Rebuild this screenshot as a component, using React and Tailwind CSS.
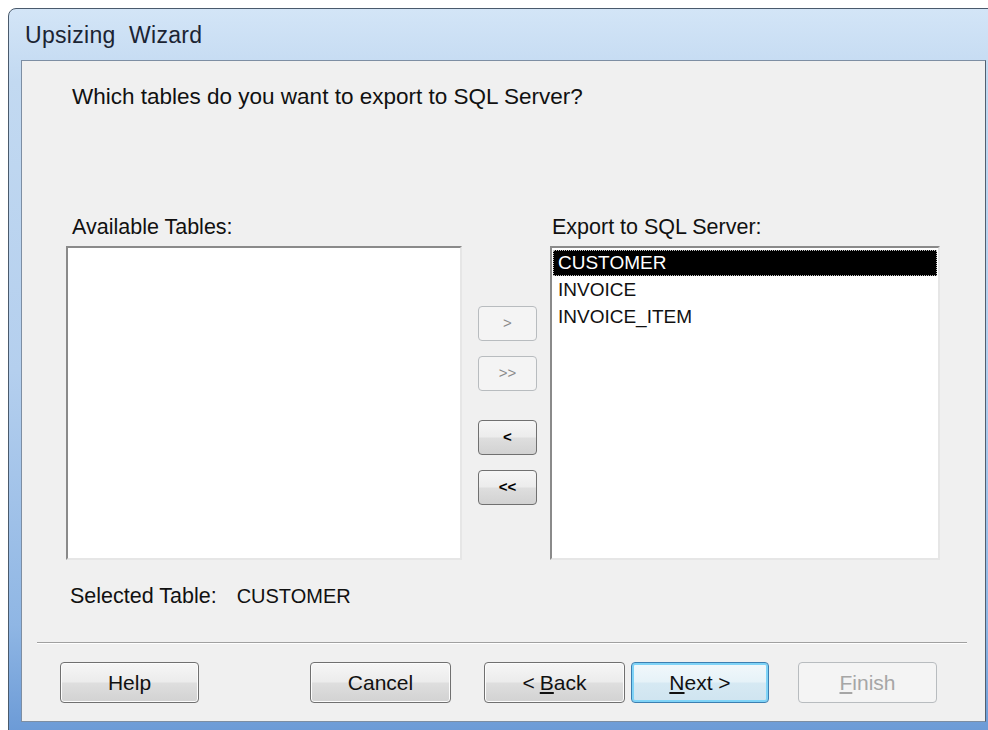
const font = { fontFamily: '"Liberation Sans", Arial, sans-serif' };

const winBtn =
  "h-[41px] rounded-[4px] border border-[#707070] bg-[linear-gradient(to_bottom,#f6f6f6_0%,#ececec_48%,#dedede_52%,#d2d2d2_100%)] shadow-[inset_0_0_0_1px_#fcfcfc] text-[21px] text-[#111] flex items-center justify-center";

const disabledBtn =
  "h-[41px] rounded-[4px] border border-[#b8bcbf] bg-[#f4f4f4] text-[21px] text-[#a6a6a6] flex items-center justify-center";

const ArrowButton = ({ label, disabled }) => (
  <div
    className={
      disabled
        ? "w-[59px] h-[35px] rounded-[4px] border border-[#b8bcbf] bg-[#f4f4f4] text-[#8a8a8a] text-[15px] flex items-center justify-center"
        : "w-[59px] h-[35px] rounded-[4px] border border-[#707070] bg-[linear-gradient(to_bottom,#f6f6f6_0%,#ececec_48%,#dedede_52%,#d2d2d2_100%)] text-black text-[15px] font-bold flex items-center justify-center"
    }
  >
    {label}
  </div>
);

const ListBox = ({ width, children }) => (
  <div
    className="h-[314px] bg-white border-2 border-t-[#8a8a8a] border-l-[#8a8a8a] border-r-[#e6e6e6] border-b-[#e6e6e6] p-[1px]"
    style={{ width }}
  >
    {children}
  </div>
);

export default function App() {
  return (
    <div className="w-[988px] h-[730px] bg-white overflow-hidden relative" style={font}>
      <div className="ml-[8px] mt-[8px] w-[991px] h-[727px] rounded-t-[8px] border border-[#4a5a6c] bg-[linear-gradient(to_bottom,#d3e5f7_0%,#c2d9f1_10%,#b4cfee_50%,#8fb6e4_85%,#6b9ad6_100%)] pl-[12px] pr-[12px] pb-[12px] flex flex-col">
        {/* title bar */}
        <div className="h-[51px] flex items-center pl-[4px] pt-[2px]">
          <span className="text-[23px] text-[#1b2433] whitespace-pre tracking-[0.3px]">
            Upsizing  Wizard
          </span>
        </div>

        {/* client area */}
        <div className="flex-1 bg-[#f0f0f0] border border-[#7d8ea3] border-r-[#52606f] flex flex-col text-[21px] text-[#111]">
          <div className="ml-[50px] mt-[24px] h-[24px] leading-[24px] text-[22.5px]">
            Which tables do you want to export to SQL Server?
          </div>

          <div className="mt-[106px] ml-[44px] flex items-start">
            <div className="flex flex-col">
              <div className="ml-[6px] h-[24px] leading-[24px] mb-[7px] text-[21.5px]">Available Tables:</div>
              <ListBox width={396} />
            </div>

            <div className="ml-[16px] mt-[91px] flex flex-col">
              <ArrowButton label=">" disabled />
              <div className="mt-[15px]">
                <ArrowButton label=">>" disabled />
              </div>
              <div className="mt-[29px]">
                <ArrowButton label="<" />
              </div>
              <div className="mt-[15px]">
                <ArrowButton label="<<" />
              </div>
            </div>

            <div className="ml-[13px] flex flex-col">
              <div className="ml-[2px] h-[24px] leading-[24px] mb-[7px] text-[21.5px]">Export to SQL Server:</div>
              <ListBox width={390}>
                <div className="mt-[1px] h-[26px] leading-[26px] pl-[5px] bg-black text-white outline-1 outline-dotted outline-[#bdbdbd] -outline-offset-1 text-[19px]">
                  CUSTOMER
                </div>
                <div className="h-[27px] leading-[27px] pl-[5px] text-[19px]">INVOICE</div>
                <div className="h-[27px] leading-[27px] pl-[5px] text-[19px]">INVOICE_ITEM</div>
              </ListBox>
            </div>
          </div>

          <div className="mt-[24px] ml-[48px] h-[24px] leading-[24px] flex">
            <span className="text-[21.5px]">Selected Table:</span>
            <span className="ml-[20px] text-[20px]">CUSTOMER</span>
          </div>

          <div className="mt-[34px] ml-[15px] w-[930px] border-t border-[#a0a0a0] border-b border-b-white" />

          <div className="mt-[18px] ml-[38px] flex">
            <div className={`${winBtn} w-[139px]`}>Help</div>
            <div className={`${winBtn} w-[141px] ml-[111px]`}>Cancel</div>
            <div className={`${winBtn} w-[141px] ml-[33px]`}>
              &lt; <span className="underline underline-offset-2 ml-[5px]">B</span>ack
            </div>
            <div className="h-[41px] w-[138px] ml-[6px] rounded-[4px] border border-[#3c7fb1] shadow-[inset_0_0_0_2px_#7fd3f7] bg-[linear-gradient(to_bottom,#f2f8fb_0%,#e6f2f8_48%,#d6e9f3_52%,#cfe4f0_100%)] text-[21px] text-[#111] flex items-center justify-center">
              <span className="underline underline-offset-2">N</span>ext &gt;
            </div>
            <div className={`${disabledBtn} w-[139px] ml-[29px]`}>
              <span className="underline underline-offset-2">F</span>inish
            </div>
          </div>
        </div>
      </div>
    </div>
  );
}
